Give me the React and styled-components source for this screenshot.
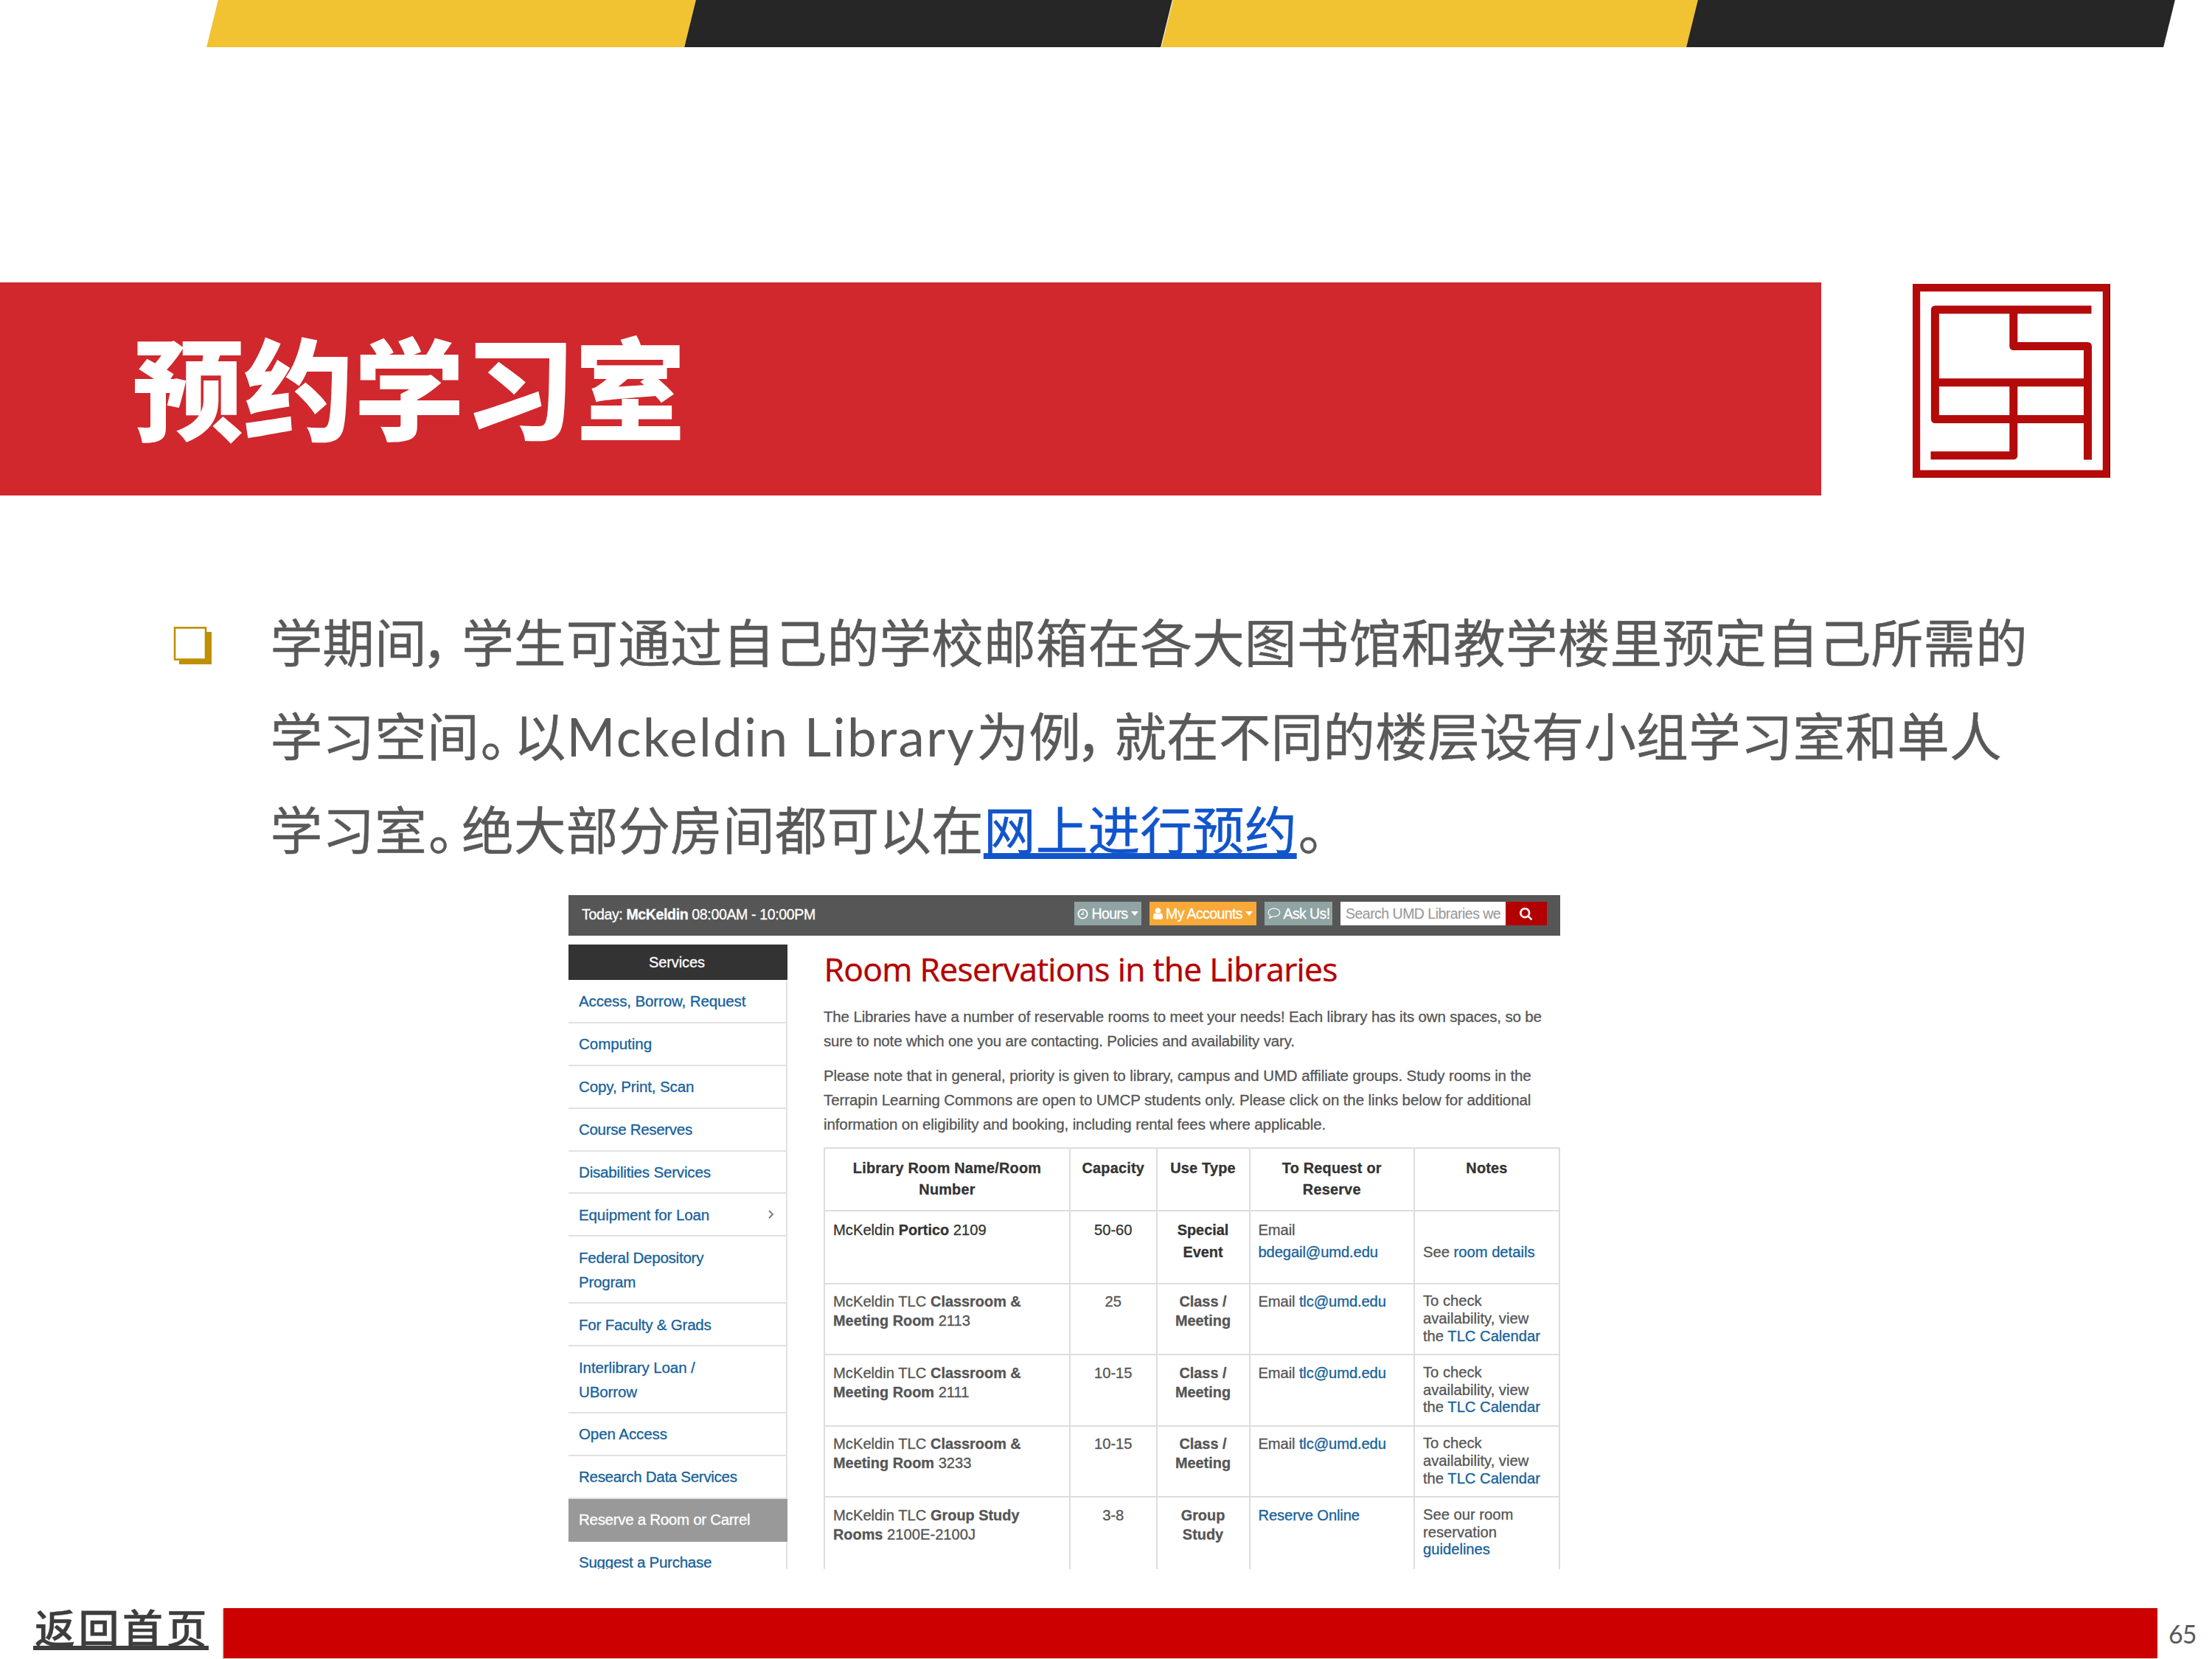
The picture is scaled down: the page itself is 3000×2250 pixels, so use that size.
import React from 'react';
import styled, { createGlobalStyle } from 'styled-components';

const Global = createGlobalStyle`
  * { box-sizing: border-box; }
  html, body { margin: 0; padding: 0; background: #fff; }
  p, h1, h2 { margin: 0; font-weight: normal; }
  a { text-decoration: none; color: inherit; }
`;

const CJK = '"Noto Sans CJK SC", sans-serif';
const SANS = '"Liberation Sans", Arial, sans-serif';

const Slide = styled.div`
  width: 3000px;
  height: 2250px;
  display: flex;
  flex-direction: column;
  background: #fff;
  overflow: hidden;
`;

const Stripes = styled.div`
  display: flex;
  height: 64px;
  padding-left: 288px;
  flex: none;
`;
const Stripe = styled.div`
  width: ${(p) => p.$w}px;
  background: ${(p) => (p.$dark ? '#262626' : '#f1c232')};
  transform: skewX(-13.8deg);
`;

const Heading = styled.header`
  display: flex;
  align-items: flex-start;
  margin-top: 319px;
  flex: none;
`;
const Banner = styled.div`
  width: 2470px;
  height: 289px;
  padding-left: 180px;
  background: #d0282d;
  display: flex;
  align-items: center;
`;
const Title = styled.h1`
  font: 900 150px/289px ${CJK};
  color: #fff;
  white-space: nowrap;
  margin-top: -14px;
`;
const LogoBox = styled.div`
  margin: 2px 0 0 124px;
  width: 268px;
  height: 263px;
  svg { display: block; }
`;

const Body = styled.section`
  display: flex;
  align-items: flex-start;
  margin-top: 132px;
  padding-left: 235px;
  height: 410px;
  flex: none;
`;
const Bullet = styled.div`
  width: 131.5px;
  padding-top: 46px;
  svg { display: block; }
`;
const Copy = styled.div`
  color: #595959;
  font: 500 70.8px/127px ${CJK};
  padding-top: 1px;
  -webkit-text-stroke: 0.4px currentColor;
`;
const Line = styled.p`
  white-space: nowrap;
  height: 127px;
`;
const Punct = styled.span`
  display: inline-block;
  width: ${(p) => (p.$w || 47) - (p.$dx || 0)}px;
  margin-left: ${(p) => p.$dx || 0}px;
  font-feature-settings: 'halt' 1;
  font-weight: 400;
`;
const Latin = styled.span`
  display: inline-block;
  width: 557px;
  padding-left: 1px;
  font-family: Lato, sans-serif;
  font-weight: 400;
  font-size: 71px;
  letter-spacing: 2.3px;
  -webkit-text-stroke: 0;
`;
const BodyLink = styled.a`
  color: #1155cc;
  text-decoration: underline;
  text-decoration-thickness: 8px;
  text-underline-offset: 4px;
  text-decoration-skip-ink: none;
`;

const Shot = styled.section`
  width: 1345px;
  height: 914px;
  margin: 0 0 0 771px;
  flex: none;
  overflow: hidden;
  font: 20.5px/33px ${SANS};
  color: #555;
  -webkit-text-stroke: 0.3px currentColor;
  display: flex;
  flex-direction: column;
`;
const TopBar = styled.div`
  height: 55px;
  flex: none;
  background: #565656;
  color: #fff;
  display: flex;
  align-items: flex-start;
  padding: 9px 18.5px 0 18px;
`;
const Today = styled.div`
  flex: 1;
  font-size: 19.5px;
  line-height: 34px;
  letter-spacing: -0.35px;
  white-space: nowrap;
`;
const Btn = styled.div`
  width: ${(p) => p.$w}px;
  height: 32px;
  margin-right: 11px;
  background: ${(p) => p.$bg};
  display: flex;
  align-items: center;
  justify-content: center;
  gap: 4px;
  font-size: 19.5px;
  letter-spacing: ${(p) => p.$ls || 0}px;
  white-space: nowrap;
  svg { flex: none; }
`;
const Caret = styled.span`
  border: 5px solid transparent;
  border-top: 6px solid #fff;
  border-bottom: 0;
`;
const Search = styled.div`
  width: 223.5px;
  height: 32px;
  padding: 0 0 0 7px;
  background: #fff;
  color: #999;
  font-size: 19.5px;
  letter-spacing: -0.52px;
  white-space: nowrap;
  -webkit-text-stroke: 0.1px currentColor;
`;
const SearchBtn = styled.div`
  width: 56px;
  height: 32px;
  background: #b30000;
  display: flex;
  align-items: center;
  justify-content: center;
`;

const Cols = styled.div`
  display: flex;
  align-items: flex-start;
  flex: 1;
`;
const Side = styled.nav`
  width: 297px;
  margin-top: 12px;
  flex: none;
  color: #16619a;
`;
const SideHead = styled.div`
  height: 48px;
  line-height: 48px;
  margin-bottom: 1px;
  padding-right: 3px;
  text-align: center;
  background: #333;
  color: #fff;
  font-size: 20px;
  letter-spacing: -0.1px;
`;
const Item = styled.a`
  display: flex;
  justify-content: space-between;
  padding: 11.4px 16px 11.5px 14px;
  border-bottom: 2px solid ${(p) => (p.$on ? '#999' : '#e2e2e2')};
  border-right: 2px solid ${(p) => (p.$on ? '#999' : '#e2e2e2')};
  background: ${(p) => (p.$on ? '#999' : '#fff')};
  color: ${(p) => (p.$on ? '#fff' : 'inherit')};
  letter-spacing: ${(p) => p.$ls || 0}px;
  svg { margin-top: 10px; }
`;

const Main = styled.div`
  margin-left: 50px;
  width: 998px;
  flex: none;
`;
const H2 = styled.h2`
  font: 44.5px/60px "Open Sans", sans-serif;
  color: #b30000;
  margin: 15px 0 0 -0.5px;
  white-space: nowrap;
  letter-spacing: -0.74px;
  -webkit-text-stroke: 0.4px #b30000;
`;
const Para = styled.p`
  line-height: 32.7px;
  margin: ${(p) => p.$mt}px 0 0 -1px;
  white-space: nowrap;
  letter-spacing: ${(p) => p.$ls || 0}px;
`;
const Table = styled.div`
  margin-top: 14px;
  margin-left: -1px;
  border-left: 2px solid #ddd;
  border-top: 2px solid #ddd;
`;
const Row = styled.div`
  display: grid;
  grid-template-columns: 333px 117.5px 126px 223.5px 197px;
  height: ${(p) => p.$h}px;
`;
const Cell = styled.div`
  border-right: 2px solid #ddd;
  border-bottom: 2px solid #ddd;
  padding: ${(p) => p.$pt || 11.5}px 0 0 ${(p) => (p.$center ? 0 : 11)}px;
  text-align: ${(p) => (p.$center ? 'center' : 'left')};
  line-height: ${(p) => p.$lh}px;
  font-weight: ${(p) => (p.$bold ? 700 : 400)};
  font-size: ${(p) => (p.$bold ? 19.9 : 20.2)}px;
  letter-spacing: ${(p) => p.$ls || 0}px;
  color: ${(p) => (p.$dark ? '#333' : '#555')};
  white-space: nowrap;
  b { font-size: 19.9px; }
`;
const Ref = styled.a`
  color: #16619a;
`;

const Footer = styled.footer`
  display: flex;
  align-items: flex-start;
  margin-top: 53px;
  height: 69px;
  flex: none;
`;
const Home = styled.a`
  width: 303px;
  padding-left: 45px;
  font: 500 55px/49px ${CJK};
  letter-spacing: 4.5px;
  color: #3d3d3d;
  white-space: nowrap;
  -webkit-text-stroke: 0.4px currentColor;
`;
const HomeText = styled.span`
  display: block;
  width: 238px;
  height: 57px;
  padding-left: 2px;
  border-bottom: 6px solid #3d3d3d;
`;
const Bar = styled.div`
  width: 2623px;
  height: 68px;
  background: #cc0000;
  box-shadow: -2px 1px 0 #e6e0d8;
`;
const Page = styled.div`
  margin-left: 15px;
  font: 34px/69px Lato, sans-serif;
  color: #595959;
  letter-spacing: -1px;
`;

const Logo = () => (
  <svg width="268" height="263" viewBox="0 0 268 263" fill="none" stroke="#b40a0a" strokeWidth="11">
    <rect x="5" y="5.2" width="258" height="252.6" strokeWidth="10.4" />
    <path
      strokeLinejoin="round"
      d="M242.500 35H30.4V183.5H237.5M136.8 35V84.5H237.5V238.500M30.4 133.7H237.5M136.8 133.7V232.8H24.500"
    />
    <path d="M267.5 0V263" stroke="#400" strokeWidth="1" />
  </svg>
);

const BoxBullet = () => (
  <svg width="53" height="52" viewBox="0 0 53 52">
    <rect x="8" y="7" width="44" height="44" fill="#bf9000" />
    <rect x="2" y="1.4" width="42" height="43" fill="#fff" stroke="#bf9000" strokeWidth="2.6" />
  </svg>
);

const Clock = () => (
  <svg width="15" height="15" viewBox="0 0 15 15" fill="none" stroke="#fff" strokeWidth="1.9">
    <circle cx="7.5" cy="7.5" r="6.1" />
    <path d="M8 3.8V8H5" strokeWidth="1.3" />
  </svg>
);
const User = () => (
  <svg width="13" height="16" viewBox="0 128 1280 1536" fill="#fff">
    <path d="M1280 1399q0 109-62.5 187t-150.5 78H213q-88 0-150.5-78T0 1399q0-85 8.5-160.5t31.5-152 58.5-131 94-89T327 832q131 128 313 128t313-128q76 0 134.5 34.5t94 89 58.5 131 31.5 152 8.5 160.5zm-256-887q0 159-112.5 271.5T640 896 368.5 783.5 256 512t112.5-271.5T640 128t271.5 112.5T1024 512z" />
  </svg>
);
const Bubble = () => (
  <svg width="18" height="16" viewBox="0 0 18 16" fill="none" stroke="#fff" strokeWidth="1.2" strokeLinejoin="round">
    <path d="M9 1.2c4.4 0 7.8 2.4 7.8 5.4S13.400 12 9 12c-.8 0-1.500-.1-2.200-.2C5.500 13 4 13.900 2.300 14.200c.9-.9 1.500-2 1.600-3.300C2.200 9.900 1.200 8.300 1.200 6.600c0-3 3.400-5.400 7.800-5.400z" />
  </svg>
);
const Magnifier = () => (
  <svg width="17" height="17" viewBox="0 128 1664 1664" fill="#fff">
    <path d="M1152 832q0-185-131.5-316.5T704 384 387.5 515.5 256 832t131.5 316.5T704 1280t316.5-131.5T1152 832zm512 832q0 52-38 90t-90 38q-54 0-90-38l-343-342q-179 124-399 124-143 0-273.500-55.500t-225-150-150-225T0 832t55.500-273.500 150-225 225-150T704 128t273.500 55.500 225 150 150 225T1408 832q0 220-124 399l343 343q37 37 37 90z" />
  </svg>
);
const Chevron = () => (
  <svg width="8" height="12" viewBox="0 0 8 12" fill="none" stroke="#777" strokeWidth="1.8">
    <path d="M1 1l5 5-5 5" />
  </svg>
);

const ITEMS = [
  ['Access, Borrow, Request', { ls: -0.12 }],
  ['Computing', { ls: 0 }],
  ['Copy, Print, Scan', { ls: -0.1 }],
  ['Course Reserves', { ls: -0.3 }],
  ['Disabilities Services', { ls: -0.17 }],
  ['Equipment for Loan', { ls: -0.1, arrow: true }],
  ['Federal Depository\nProgram', { ls: -0.22 }],
  ['For Faculty & Grads', { ls: -0.2 }],
  ['Interlibrary Loan /\nUBorrow', { ls: -0.1 }],
  ['Open Access', { ls: -0.08 }],
  ['Research Data Services', { ls: -0.29 }],
  ['Reserve a Room or Carrel', { ls: -0.29, on: true }],
  ['Suggest a Purchase', { ls: -0.25 }],
];

const lines = (s) =>
  s.split('\n').map((t, i) => (
    <React.Fragment key={i}>
      {i > 0 && <br />}
      {t}
    </React.Fragment>
  ));

const calendar = (
  <>
    To check<br />availability, view<br />the <Ref>TLC Calendar</Ref>
  </>
);
const tlcMail = (
  <>
    Email <Ref>tlc@umd.edu</Ref>
  </>
);
const ROWS = [
  { h: 96.6, name: ['Classroom &', 'Meeting Room', '2113'], cap: '25', use: 'Class /\nMeeting', req: tlcMail, note: calendar },
  { h: 96.6, name: ['Classroom &', 'Meeting Room', '2111'], cap: '10-15', use: 'Class /\nMeeting', req: tlcMail, note: calendar },
  { h: 96.5, name: ['Classroom &', 'Meeting Room', '3233'], cap: '10-15', use: 'Class /\nMeeting', req: tlcMail, note: calendar },
  {
    h: 110,
    name: ['Group Study', 'Rooms', '2100E-2100J'],
    cap: '3-8',
    use: 'Group\nStudy',
    req: <Ref>Reserve Online</Ref>,
    note: (
      <>
        See our room<br />reservation<br /><Ref>guidelines</Ref>
      </>
    ),
  },
];

const LibraryPage = () => (
  <Shot>
    <TopBar>
      <Today>Today: <b>McKeldin</b> 08:00AM - 10:00PM</Today>
      <Btn $w={91} $bg="#90a4a4" $ls={-0.6}><Clock />Hours<Caret /></Btn>
      <Btn $w={145} $bg="#f9a937" $ls={-0.6}><User />My Accounts<Caret /></Btn>
      <Btn $w={92} $bg="#90a4a4" $ls={-0.6}><Bubble />Ask Us!</Btn>
      <Search>Search UMD Libraries we</Search>
      <SearchBtn><Magnifier /></SearchBtn>
    </TopBar>
    <Cols>
      <Side>
        <SideHead>Services</SideHead>
        {ITEMS.map(([t, o]) => (
          <Item key={t} $on={o.on} $ls={o.ls}>
            <span>{lines(t)}</span>
            {o.arrow && <Chevron />}
          </Item>
        ))}
      </Side>
      <Main>
        <H2>Room Reservations in the Libraries</H2>
        <Para $mt={19} $ls={-0.155}>
          The Libraries have a number of reservable rooms to meet your needs! Each library has its own spaces, so be<br />
          sure to note which one you are contacting. Policies and availability vary.
        </Para>
        <Para $mt={15} $ls={-0.105}>
          Please note that in general, priority is given to library, campus and UMD affiliate groups. Study rooms in the<br />
          Terrapin Learning Commons are open to UMCP students only. Please click on the links below for additional<br />
          information on eligibility and booking, including rental fees where applicable.
        </Para>
        <Table>
          <Row $h={85}>
            {['Library Room Name/Room\nNumber', 'Capacity', 'Use Type', 'To Request or\nReserve', 'Notes'].map((t) => (
              <Cell key={t} $center $bold $dark $ls={0.2} $lh={29.6} $pt={12.3}>{lines(t)}</Cell>
            ))}
          </Row>
          <Row $h={99.2}>
            <Cell $dark $lh={29.6}>McKeldin <b>Portico</b> 2109</Cell>
            <Cell $dark $center $lh={29.6}>50-60</Cell>
            <Cell $dark $center $bold $lh={29.6}>Special<br />Event</Cell>
            <Cell $ls={-0.12} $lh={29.6}>Email<br /><Ref>bdegail@umd.edu</Ref></Cell>
            <Cell $lh={29.6} $pt={41.1}>See <Ref>room details</Ref></Cell>
          </Row>
          {ROWS.map((r) => (
            <Row key={r.name.join()} $h={r.h}>
              <Cell $lh={25.7}>McKeldin TLC <b>{r.name[0]}<br />{r.name[1]}</b> {r.name[2]}</Cell>
              <Cell $center $lh={24}>{r.cap}</Cell>
              <Cell $center $bold $lh={25.7}>{lines(r.use)}</Cell>
              <Cell $ls={-0.12} $lh={24}>{r.req}</Cell>
              <Cell $lh={23.8}>{r.note}</Cell>
            </Row>
          ))}
        </Table>
      </Main>
    </Cols>
  </Shot>
);

export default function App() {
  return (
    <Slide>
      <Global />
      <Stripes>
        <Stripe $w={648.3} />
        <Stripe $w={646.4} $dark />
        <Stripe $w={712.5} />
        <Stripe $w={646.5} $dark />
      </Stripes>
      <Heading>
        <Banner><Title>预约学习室</Title></Banner>
        <LogoBox><Logo /></LogoBox>
      </Heading>
      <Body>
        <Bullet><BoxBullet /></Bullet>
        <Copy>
          <Line>学期间<Punct $dx={-7}>，</Punct>学生可通过自己的学校邮箱在各大图书馆和教学楼里预定自己所需的</Line>
          <Line>学习空间<Punct $dx={2}>。</Punct>以<Latin>Mckeldin Library</Latin>为例<Punct $w={45} $dx={-7}>，</Punct>就在不同的楼层设有小组学习室和单人</Line>
          <Line>学习室<Punct $dx={2}>。</Punct>绝大部分房间都可以在<BodyLink>网上进行预约</BodyLink><Punct $dx={2}>。</Punct></Line>
        </Copy>
      </Body>
      <LibraryPage />
      <Footer>
        <Home><HomeText>返回首页</HomeText></Home>
        <Bar />
        <Page>65</Page>
      </Footer>
    </Slide>
  );
}
